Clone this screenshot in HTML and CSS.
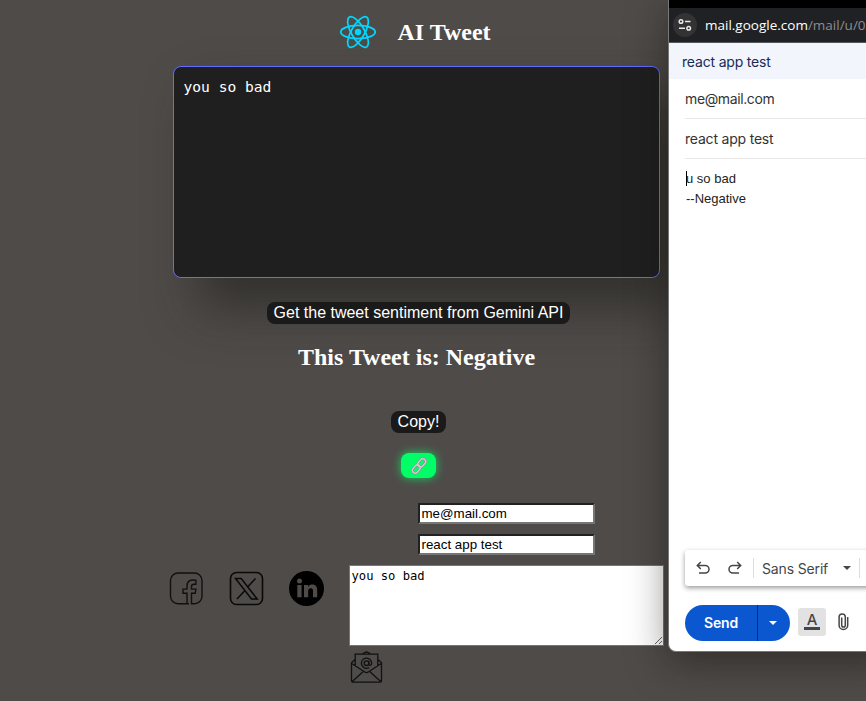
FILE: index.html
```html
<!DOCTYPE html>
<html lang="en">
<head>
<meta charset="utf-8">
<title>AI Tweet</title>
<link rel="stylesheet" href="styles.css">
</head>
<body>
<main class="app">
  <header class="brand">
    <svg class="react" width="36" height="34" viewBox="-11.5 -10.5 23 21" fill="none" stroke="#00d8ff" stroke-width="1.1"><circle r="2.05" fill="#00d8ff" stroke="none"/><ellipse rx="11" ry="4.2"/><ellipse rx="11" ry="4.2" transform="rotate(60)"/><ellipse rx="11" ry="4.2" transform="rotate(120)"/></svg>
    <h1>AI Tweet</h1>
  </header>
  <textarea class="tweet" spellcheck="false">you so bad</textarea>
  <button class="dark ask">Get the tweet sentiment from Gemini API</button>
  <h2>This Tweet is: Negative</h2>
  <button class="dark copy">Copy!</button>
  <button class="link" aria-label="Copy link"><svg width="18" height="18" viewBox="0 0 18 18" fill="none" stroke-linecap="round"><g stroke="#8f858f" stroke-width="2.5"><rect x="7.2" y="3.1" width="9" height="5.6" rx="2.8" transform="rotate(-48 11.7 5.9)"/><rect x="1.8" y="9.2" width="9" height="5.6" rx="2.8" transform="rotate(-48 6.3 12)"/></g><g stroke="#d2c8d2" stroke-width="1.5"><rect x="7.2" y="3.1" width="9" height="5.6" rx="2.8" transform="rotate(-48 11.7 5.9)"/><rect x="1.8" y="9.2" width="9" height="5.6" rx="2.8" transform="rotate(-48 6.3 12)"/></g></svg></button>
  <section class="share">
    <nav class="social">
      <svg width="36" height="36" viewBox="0 0 36 36" fill="none" stroke="#111" stroke-width="1.4"><path d="M21 33.8H10a7.500 7.500 0 0 1-7.500-7.500V10.500A7.500 7.500 0 0 1 10 3h16.500a7.500 7.500 0 0 1 7.500 7.500v15.800a7.500 7.500 0 0 1-7.500 7.500H23.500V23.300h3.700l.7-4.200h-4.400v-2.500c0-1.500.8-2.300 2.400-2.300h2V10.300c-5.700-1-8.900.8-8.900 5.600v3.200h-4v4.200h4v10.500"/></svg>
      <svg width="36" height="36" viewBox="0 0 36 36" fill="none" stroke="#090909"><rect x="2.500" y="2.500" width="32" height="32" rx="6" stroke-width="1.6"/><path d="M7.500 8.500h5.700l16 20.500h-5.700zM27.500 8.500l-8.400 9M17.200 20.300L9 29" stroke-width="1.500"/></svg>
      <svg width="36" height="36" viewBox="0 0 36 36"><circle cx="18.500" cy="18.500" r="17.500" fill="#000"/><g fill="#4f4b49"><circle cx="11.500" cy="11" r="2.500"/><path d="M9.300 15h4.300v12.300H9.300zM16 15h4.100v1.700c1.100-1.500 2.500-2.100 4.200-2.100 3.200 0 4.900 2.100 4.900 5.600v7.100H25V21c0-1.800-.7-2.800-2.200-2.800-1.700 0-2.600 1.200-2.600 3v6.100H16z"/></g></svg>
    </nav>
    <form class="mail">
      <input value="me@mail.com" aria-label="To">
      <input value="react app test" aria-label="Subject">
      <textarea spellcheck="false" aria-label="Message">you so bad</textarea>
      <svg class="envelope" width="33" height="33" viewBox="0 0 33 33" fill="none" stroke="#111" stroke-width="1.300"><path d="M5.200 16V3.200h22.600V16M12.500 3L14.800 1.500q1.700-1 3.400 0L20.500 3M5 8.600L1.500 11.800v17.400q0 2 2 2h26q2 0 2-2V11.800L28 8.600M1.800 12.500L14.700 21q1.800 1.200 3.600 0l12.900-8.500M2.300 30.500L13 20.800M30.700 30.500L20 20.800"/><circle cx="16.500" cy="12.200" r="2.300"/><path d="M18.800 9.800v3.300q.2 1.500 1.500 1.300 1.300-.3 1.300-2.300a5.100 5.100 0 1 0-2.500 4.500"/></svg>
    </form>
  </section>
</main>
<aside class="window">
  <div class="titlebar"></div>
  <div class="address">
    <span class="site"><svg width="14" height="14" viewBox="0 0 14 14" fill="none" stroke="#e8e8e8" stroke-width="1.500"><circle cx="3" cy="3.500" r="1.800"/><path d="M7 3.500h5.500M1 10.200h6"/><circle cx="10.700" cy="10.200" r="1.800"/></svg></span>
    <span class="url"><b>mail.google.com</b>/mail/u/0/</span>
  </div>
  <div class="subject-head">react app test</div>
  <div class="field">me@mail.com</div>
  <div class="field">react app test</div>
  <div class="message"><i class="caret"></i>u so bad<br>--Negative</div>
  <div class="format">
    <svg class="undo" width="14" height="14" viewBox="0 0 14 14" fill="none" stroke="#444746" stroke-width="1.500"><path d="M4.800 1L1.300 4.500l3.500 3.500M1.500 4.500h7.700a3.800 3.800 0 0 1 0 7.600H3"/></svg>
    <svg class="redo" width="14" height="14" viewBox="0 0 14 14" fill="none" stroke="#444746" stroke-width="1.500"><path d="M9.200 1l3.500 3.500L9.200 8M12.500 4.500H4.800a3.800 3.800 0 0 0 0 7.600H11"/></svg>
    <span class="divider"></span><span class="family">Sans Serif</span><span class="arrow"></span><span class="divider end"></span>
  </div>
  <div class="actions">
    <div class="send"><span>Send</span><span class="more"><i class="arrow"></i></span></div>
    <div class="color"><span>A</span></div>
    <svg class="clip" width="11" height="18" viewBox="0 0 11 18" fill="none" stroke="#444746" stroke-width="1.500"><path d="M9.700 4v8.300a4.300 4.300 0 0 1-8.600 0V4a3.100 3.100 0 0 1 6.200 0v8.200a1.800 1.800 0 0 1-3.600 0V4.500"/></svg>
  </div>
</aside>
</body>
</html>
```
FILE: styles.css
```css
* { box-sizing: border-box; }
body { margin: 0; height: 701px; overflow: hidden; position: relative; background: #4f4b49; font-family: "Liberation Sans", Arial, sans-serif; color: #fff; }
.app { width: 836px; height: 701px; display: flex; flex-direction: column; align-items: center; }
.brand { height: 66px; display: flex; align-items: center; gap: 21px; padding-bottom: 2px; margin-right: 5px; flex: none; }
h1, h2 { font: bold 24px/28px "Liberation Serif", "Times New Roman", serif; margin: 0; }
.tweet { width: 487px; height: 212px; flex: none; margin-right: 3px; padding: 10px 9.5px; resize: none; outline: none; border: 1px solid #646cff; border-radius: 8px; background: #1f1f1f; color: #fff; font: 14.6px/19px "DejaVu Sans Mono", monospace; box-shadow: 25px 30px 50px rgba(32,31,27,.6); }
button { border: 0; padding: 0; }
.dark { height: 22px; border-radius: 8px; background: #1a1a1a; color: #fff; font: 16px/20px "Liberation Sans", Arial, sans-serif; flex: none; }
.ask { width: 303px; margin-top: 24px; padding-left: 1px; }
h2 { margin: 19px 3px 0 0; }
.copy { width: 55px; margin-top: 40px; padding-left: 1px; }
.link { width: 35px; height: 25px; flex: none; margin-top: 20px; padding-left: 1px; border-radius: 8px; background: #00ff66; box-shadow: 0 0 10px rgba(0,255,102,.75); display: flex; align-items: center; justify-content: center; }
.share { width: 100%; display: flex; padding-left: 168px; margin-top: 25px; }
.social { width: 181px; display: flex; gap: 24px; padding-top: 67px; }
.mail { width: 315px; display: flex; flex-direction: column; }
.mail input { width: 177px; height: 21px; margin: 0 0 10px 69px; padding: 1px 1.5px; border: 2px inset #767676; border-radius: 0; background: #fff; color: #000; font: 13.333px "Liberation Sans", Arial, sans-serif; }
.mail textarea { width: 315px; height: 81px; display: block; margin: 0; padding: 2px 1.5px; border: 1px solid #767676; background: #fff; color: #000; font: 12.17px/16px "DejaVu Sans Mono", monospace; }
.envelope { margin: 5px 0 0 1px; }
.window { position: absolute; left: 668px; top: 0; width: 230px; height: 652px; background: #fff; border-left: 1px solid #777; border-bottom: 1px solid #777; border-radius: 0 0 0 8px; overflow: hidden; box-shadow: 0 10px 38px rgba(15,15,12,.5); color: #333; font-family: Inter, sans-serif; }
.titlebar { height: 8px; background: #000; }
.address { height: 35px; background: #202124; border-bottom: 1px solid #55585b; display: flex; align-items: center; padding-left: 4px; gap: 8px; }
.site { width: 24px; height: 24px; border-radius: 50%; background: #333; display: flex; align-items: center; justify-content: center; }
.url { font: 13.5px "Open Sans", "Noto Sans", sans-serif; color: #8b8d91; white-space: nowrap; }
.url b { font-weight: 400; color: #fff; }
.subject-head { height: 36px; background: #f2f6fc; color: #172b57; padding-left: 13px; font-size: 14px; line-height: 38px; letter-spacing: -.18px; }
.field { height: 40px; margin-left: 16px; border-bottom: 1px solid #e8e8e8; font-size: 14px; line-height: 40px; letter-spacing: -.2px; }
.field:nth-of-type(4) { letter-spacing: -.38px; }
.message { position: relative; height: 391px; padding: 10px 0 0 17px; font: 13px/20px "Liberation Sans", Arial, sans-serif; color: #222; }
.caret { position: absolute; left: 17px; top: 12px; width: 1px; height: 15px; background: #000; }
.format { height: 36px; margin-left: 16px; border-radius: 3px; display: flex; align-items: center; padding-left: 11px; box-shadow: 0 2px 5px rgba(0,0,0,.4); color: #444746; }
.redo { margin-left: 18px; }
.divider { width: 1px; height: 20px; background: #ddd; margin-left: 11px; }
.family { margin-left: 8px; width: 67px; font-size: 14px; letter-spacing: -.15px; white-space: nowrap; }
.arrow { width: 0; height: 0; border: 4px solid transparent; border-top-color: currentColor; border-bottom: 0; margin-left: 14px; }
.divider.end { margin-left: 8px; }
.actions { display: flex; align-items: center; margin: 18px 0 0 16px; height: 37px; }
.send { width: 105px; height: 36px; border-radius: 18px; background: #0b57d0; color: #fff; display: flex; align-items: center; font-size: 14px; font-weight: 600; letter-spacing: -.2px; }
.send > span:first-child { width: 72px; text-align: center; }
.send .more { width: 33px; height: 36px; border-left: 1px solid #062e6f; display: flex; align-items: center; justify-content: center; }
.more .arrow { margin: 0 2px 0 0; }
.color { width: 28px; height: 28px; margin: -2px 0 0 8px; border-radius: 3px; background: #e2e2e2; display: flex; justify-content: center; }
.color span { width: 16px; height: 22px; border-bottom: 3px solid #444746; font: 500 15px/23px Inter, sans-serif; text-align: center; color: #444746; }
.clip { margin: -2px 0 0 12px; }
```
